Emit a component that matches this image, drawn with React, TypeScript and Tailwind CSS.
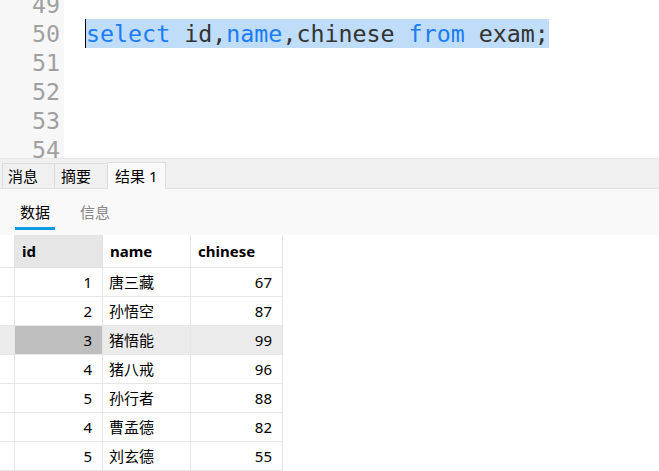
import React from "react";

const rows = [
  { id: 1, name: "唐三藏", chinese: 67 },
  { id: 2, name: "孙悟空", chinese: 87 },
  { id: 3, name: "猪悟能", chinese: 99 },
  { id: 4, name: "猪八戒", chinese: 96 },
  { id: 5, name: "孙行者", chinese: 88 },
  { id: 4, name: "曹孟德", chinese: 82 },
  { id: 5, name: "刘玄德", chinese: 55 },
];

const ui = { fontFamily: '"Noto Sans", "Noto Sans CJK SC", sans-serif' };
const mono = { fontFamily: '"DejaVu Sans Mono", monospace' };

export default function App() {
  return (
    <div className="w-[659px] h-[471px] overflow-hidden bg-white" style={ui}>
      {/* Editor */}
      <div className="flex h-[158px] overflow-hidden" style={mono}>
        <div className="w-[64px] bg-[#f7f7f7] text-[#a0a0a0] text-[23.3px] leading-[29px] text-right pr-[4px] -mt-[10px]">
          {[49, 50, 51, 52, 53, 54].map(n => (
            <div key={n}>{n}</div>
          ))}
        </div>
        <div className="flex-1 pl-[21px] text-[23.3px] leading-[29px] -mt-[10px]">
          <div>&nbsp;</div>
          <div className="flex">
            <span className="bg-[#bfdcf8] border-l border-black whitespace-pre text-[#333]">
              <span className="text-[#1c7cf4]">select</span> id,<span className="text-[#1c7cf4]">name</span>,chinese <span className="text-[#1c7cf4]">from</span> exam;
            </span>
          </div>
        </div>
      </div>

      {/* Result tabs */}
      <div className="h-[31px] bg-[#f0f0f0] border-t border-[#e6e6e6] border-b border-b-[#e0e0e0] flex items-end pl-[2px] text-[15px] text-black">
        <div className="w-[53px] h-[25px] border border-b-0 border-[#dcdcdc] flex items-center pl-[5px]">消息</div>
        <div className="w-[53px] h-[25px] border border-b-0 border-l-0 border-[#dcdcdc] flex items-center pl-[6px]">摘要</div>
        <div className="w-[58px] h-[27px] bg-[#f9f9f9] border border-b-0 border-l-0 border-[#dcdcdc] flex items-center pl-[7px] -mb-px">结果 1</div>
      </div>

      {/* Sub tabs */}
      <div className="h-[46px] bg-[#f9f9f9] flex items-start pl-[15px] pt-[13px] text-[15px] gap-[25px]">
        <div className="flex flex-col items-center w-[40px]">
          <span className="text-black leading-[20px]">数据</span>
          <span className="mt-[5px] h-[3px] w-[40px] bg-[#0a9be0]" />
        </div>
        <span className="text-[#888] leading-[20px]">信息</span>
      </div>

      {/* Grid */}
      <div className="grid grid-cols-[15px_88px_88px_92px] text-[15px] text-black">
        <div className="h-[33px] border-r border-b border-[#e6e6e6]" />
        <div className="h-[33px] bg-[#e6e6e6] border-r border-b border-[#e0e0e0] font-bold flex items-center pl-[7px]">id</div>
        <div className="h-[33px] border-r border-b border-[#e6e6e6] font-bold flex items-center pl-[7px]">name</div>
        <div className="h-[33px] border-r border-b border-[#e6e6e6] font-bold flex items-center pl-[7px]">chinese</div>
        {rows.map((r, i) => {
          const sel = i === 2;
          return (
            <React.Fragment key={i}>
              <div className={`h-[29px] border-r border-b border-[#e6e6e6] ${sel ? "bg-[#ebebeb]" : ""}`} />
              <div className={`h-[29px] border-r border-b border-[#e6e6e6] flex items-center justify-end pr-[10px] ${sel ? "bg-[#bebebe]" : ""}`}>{r.id}</div>
              <div className={`h-[29px] border-r border-b border-[#e6e6e6] flex items-center pl-[6px] ${sel ? "bg-[#ebebeb]" : ""}`}>{r.name}</div>
              <div className={`h-[29px] border-r border-b border-[#e6e6e6] flex items-center justify-end pr-[10px] ${sel ? "bg-[#ebebeb]" : ""}`}>{r.chinese}</div>
            </React.Fragment>
          );
        })}
      </div>
    </div>
  );
}
